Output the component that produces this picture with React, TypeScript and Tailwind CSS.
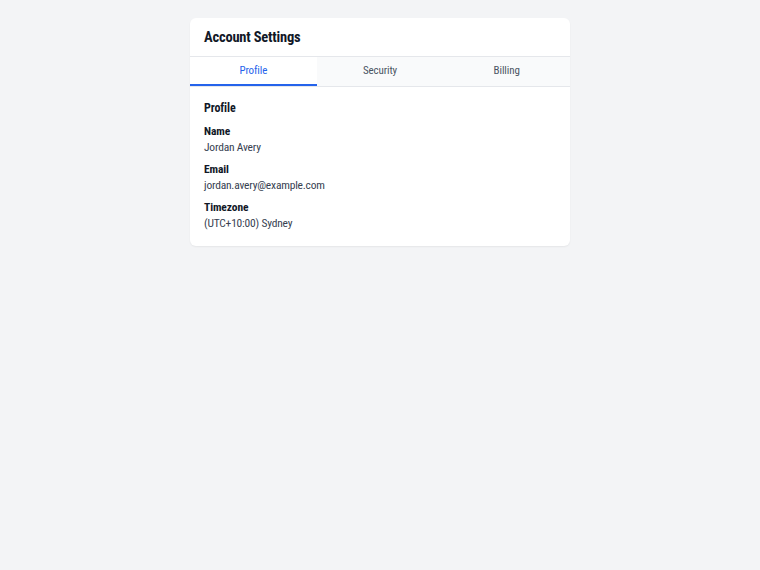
import React from "react";

export default function App() {
  const fields = [
    { label: "Name", value: "Jordan Avery" },
    { label: "Email", value: "jordan.avery@example.com" },
    { label: "Timezone", value: "(UTC+10:00) Sydney" },
  ];
  return (
    <div className="min-h-[570px] w-full bg-[#f3f4f6] pt-[18px]" style={{ fontFamily: '"Roboto Condensed", "Liberation Sans", Arial, sans-serif' }}>
      <div className="mx-auto w-[380px] overflow-hidden rounded-md bg-white shadow-[0_1px_2px_rgba(0,0,0,0.06)]">
        <div className="border-b border-[#e5e7eb] px-[14px] pb-[8px] pt-[10px]">
          <h1 className="text-[14.5px] font-bold leading-[20px] tracking-[-0.2px] text-[#111827]">Account Settings</h1>
        </div>
        <div className="flex border-b border-[#e5e7eb] bg-[#f9fafb]">
          <button className="flex-1 border-b-2 border-[#2563eb] bg-white pb-[5px] pt-[6px] text-[11px] leading-[16px] tracking-[-0.1px] text-[#2563eb]">Profile</button>
          <button className="flex-1 border-b-2 border-transparent pb-[5px] pt-[6px] text-[11px] leading-[16px] tracking-[-0.1px] text-[#4b5563]">Security</button>
          <button className="flex-1 border-b-2 border-transparent pb-[5px] pt-[6px] text-[11px] leading-[16px] tracking-[-0.1px] text-[#4b5563]">Billing</button>
        </div>
        <div className="px-[14px] pb-[15px] pt-[12px]">
          <h2 className="mb-[6px] text-[12px] font-bold leading-[18px] tracking-[-0.1px] text-[#111827]">Profile</h2>
          <div className="flex flex-col gap-[6px]">
            {fields.map((f) => (
              <div key={f.label}>
                <div className="text-[11.5px] font-bold leading-[16px] tracking-[-0.1px] text-[#111827]">{f.label}</div>
                <div className="text-[11.5px] leading-[16px] tracking-[-0.2px] text-[#374151]">{f.value}</div>
              </div>
            ))}
          </div>
        </div>
      </div>
    </div>
  );
}
